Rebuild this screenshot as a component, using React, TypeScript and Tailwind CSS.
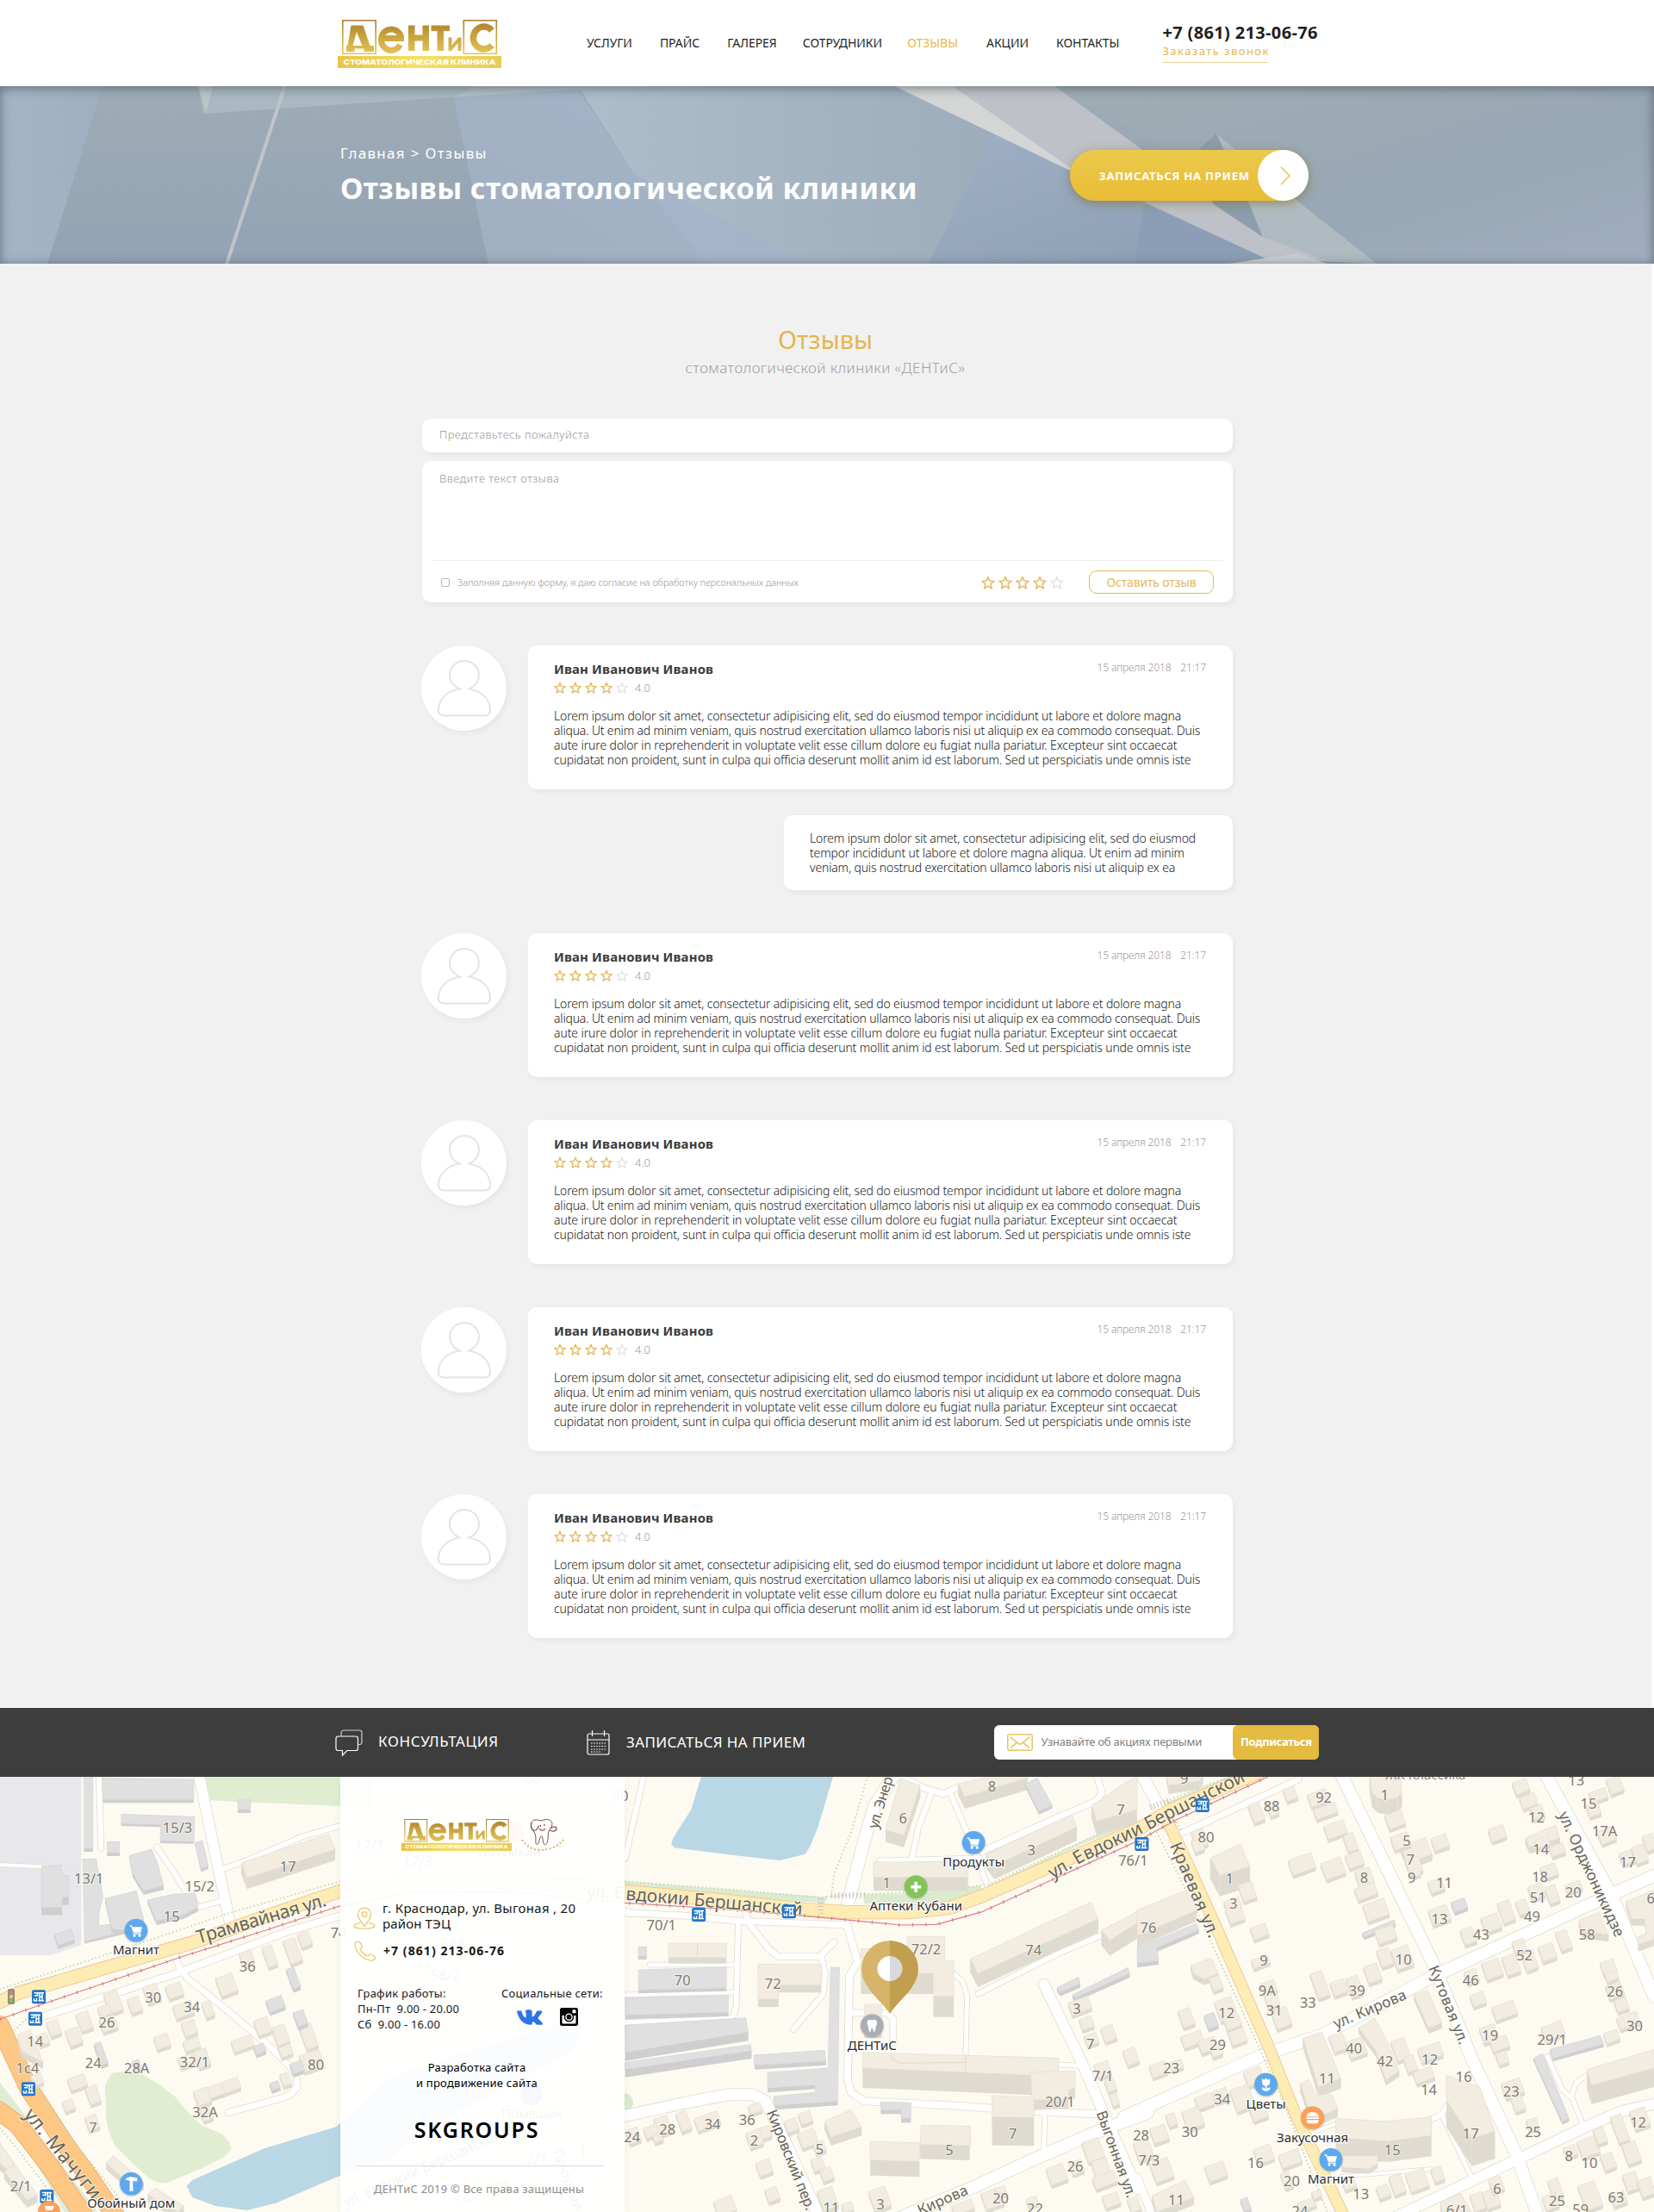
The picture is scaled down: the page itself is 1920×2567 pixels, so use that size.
import type { ReactNode } from "react";

/* ---------- map drawing ---------- */

type Region = "A" | "B" | "C" | "S";

// Tile origin and scale of each map survey sheet.
const SHEETS: Record<Region, [number, number]> = {
  A: [0, 1 / 3],
  B: [720, 600 / 1568],
  C: [1320, 600 / 1568],
  S: [390, 1 / 3],
};

const at = (r: Region, x: number, y: number): [number, number] => [
  Math.round((SHEETS[r][0] + x * SHEETS[r][1]) * 10) / 10,
  Math.round((y / 3 - 2) * 10) / 10,
];

const pts = (r: Region, s: string): [number, number][] =>
  s.split(" ").map((p) => {
    const [x, y] = p.split(",").map(Number);
    return at(r, x, y);
  });

const str = (p: [number, number][]) => p.map((q) => q.join(",")).join(" ");

const AREAS: [Region, string, string][] = [
  ["A", "#e7e7ec", "0,0 283,0 283,592 175,627 0,627"],
  ["A", "#e0edd1", "712,0 1300,0 1300,112 1185,108 733,88"],
  ["A", "#e0edd1", "366,1080 390,1037 430,1033 500,1045 555,1078 610,1120 660,1180 700,1218 775,1250 800,1280 805,1305 780,1330 690,1375 580,1420 550,1418 520,1405 450,1340 400,1290 378,1240 370,1200"],
  ["A", "#dfecd3", "0,1070 60,1150 340,1521 225,1521 0,1140"],
  ["S", "#b9d7e4", "-520,1430 -500,1410 -250,1300 0,1225 190,1050 500,950 760,870 860,860 830,960 600,1080 370,1200 200,1330 0,1400 -210,1490 -310,1515 -420,1500 -500,1470"],
  ["B", "#b9d7e4", "247,0 647,0 600,180 575,250 560,275 485,297 350,280 165,253 155,240 160,220 215,120"],
  ["B", "#dcead0", "-200,350 15,370 400,405 630,425 620,445 400,430 15,390 -200,372"],
  ["B", "#dcead0", "740,415 900,412 1090,385 1100,400 1070,420 1000,445 740,448"],
  ["B", "#dcead0", "1120,385 1568,140 1568,165 1400,240 1125,395"],
  ["C", "#dcead0", "90,95 290,0 350,0 95,125"],
];

const ROADS: [Region, number, string][] = [
  ["A", 6, "345,0 352,255"],
  ["A", 12, "693,0 740,230 800,510"],
  ["A", 6, "780,325 840,305 1050,215 1190,175"],
  ["A", 6, "545,250 600,330 650,410 690,460 765,440"],
  ["A", 4, "0,312 215,322"],
  ["A", 8, "150,840 600,695 1000,545 1185,490 1450,440 1900,440 2200,480"],
  ["A", 7, "605,615 625,670 650,705 780,810 930,935 1010,1015 1032,1050 1035,1085 1015,1110 980,1125 795,1175"],
  ["B", 6, "72,0 15,290"],
  ["B", 14, "830,0 770,110 735,250 690,450"],
  ["B", 8, "680,490 720,650 695,700 690,1060 700,1105 740,1135 1000,1150 1250,1170 1440,1180"],
  ["B", 7, "0,478 200,490 360,508 690,522"],
  ["B", 7, "380,480 390,515 450,605 480,632 605,632 648,582"],
  ["B", 6, "610,632 622,690 615,765 525,885"],
  ["B", 6, "358,505 352,800 345,835 330,848 15,862"],
  ["B", 5, "90,660 350,660"],
  ["B", 5, "15,765 348,755"],
  ["B", 7, "698,828 810,828 828,848 828,930"],
  ["B", 5, "920,662 1000,680 1040,720 1052,770 1048,975"],
  ["B", 6, "1085,762 1330,620 1480,548"],
  ["B", 6, "945,60 905,180 885,290"],
  ["B", 7, "840,0 920,45 980,65 1020,45"],
  ["B", 6, "1002,65 1060,220 1120,405"],
  ["B", 7, "1445,0 1462,60 1445,90 1340,140 1100,265"],
  ["B", 5, "785,297 1090,288"],
  ["B", 12, "1285,728 1400,1000 1490,1240 1568,1440"],
  ["B", 14, "1600,1175 1440,1245 1260,1335 1060,1440 850,1540"],
  ["B", 5, "1288,1170 1285,1310"],
  ["B", 5, "1330,1008 1390,1012"],
  ["B", 13, "0,1190 200,1140 330,1112 400,1112 440,1135 470,1200 600,1530"],
  ["C", 14, "-40,1190 380,975 560,905 900,700 1440,415 1568,350"],
  ["C", 14, "620,0 900,660 1020,1000 1150,1320 1215,1530"],
  ["C", 14, "1240,0 1440,420 1568,770"],
  ["C", 13, "15,0 85,150"],
  ["C", 7, "120,210 490,15"],
  ["C", 12, "780,1540 1150,1340 1350,1230 1470,1170 1568,1145"],
  ["C", 4, "540,1240 600,1215"],
  ["C", 4, "620,1398 900,1370"],
  ["C", 6, "890,1200 925,1180 940,1150 1050,1095"],
  ["C", 5, "925,1185 1010,1390"],
  ["C", 5, "1245,980 1290,1095 1320,1125 1355,1225"],
  ["C", 5, "1318,1115 1332,1070 1365,1045"],
  ["C", 9, "0,1400 45,1530"],
];

const YELLOW: [number, number][] = [
  ...pts("A", "0,790 60,760 250,705 680,580 900,500 1190,402"),
  ...pts("S", "250,380 500,370 700,375"),
  ...pts("B", "15,405 300,435 560,468 700,478 870,478 1000,462 1100,420 1300,320 1568,190"),
  ...pts("C", "100,122 370,-10"),
];
const TRAM: [number, number][] = [
  ...pts("A", "0,850 140,800 400,712 640,630 900,548 1185,455"),
  ...pts("S", "250,410 600,405"),
  ...pts("B", "15,445 300,465 560,490 850,522 960,520 1100,475 1300,370 1568,230"),
  ...pts("C", "120,155 400,4"),
];
const KRAEVAYA = pts("C", "90,155 150,300 240,530 400,950 480,1180 625,1530");
const MACHUGI = pts("A", "0,870 40,960 100,1090 230,1290 300,1385 400,1530");
const MACHUGI_2 = pts("A", "-10,1165 60,1215 180,1370 290,1530");

const DOTS: [Region, string][] = [
  ["A", "0,745 400,615 800,480 1185,370"],
  ["A", "35,940 50,890 90,850"],
  ["A", "40,930 90,1040 160,1150 300,1330 430,1490"],
  ["A", "0,1230 60,1300 180,1460"],
  ["B", "15,370 300,395 600,425 740,415 1000,400 1120,380 1568,142"],
  ["B", "750,6 700,200 650,340 640,415"],
  ["C", "90,90 290,0"],
  ["C", "60,200 200,520 390,1000 440,1130 580,1530"],
  ["C", "120,165 135,195"],
];

const LIGHT = ["#f2ece1", "#dfdbd0"];
const GREY = ["#e0e0e1", "#cfcfd0"];

// Larger buildings: sheet, palette, wall height, roof outline.
const BLOCKS: [Region, string[], number, string][] = [
  ["A", GREY, 4, "358,10 675,15 675,85 358,85"],
  ["A", GREY, 4, "292,6 324,6 324,255 292,255"],
  ["A", GREY, 3, "422,136 678,145 676,230 558,228 558,172 422,168"],
  ["A", GREY, 4, "373,232 417,232 417,270 373,270"],
  ["A", GREY, 4, "828,84 872,84 872,120 828,120"],
  ["A", GREY, 9, "144,315 216,315 216,350 240,350 240,425 216,425 216,460 144,460"],
  ["A", GREY, 3, "288,292 335,292 358,420 345,470 345,525 440,510 430,545 294,578"],
  ["A", GREY, 5, "450,280 528,258 548,305 570,385 500,402 462,340"],
  ["A", GREY, 5, "366,430 475,403 500,500 430,540 390,535"],
  ["A", GREY, 5, "515,435 600,415 680,410 690,460 640,485 545,508"],
  ["A", GREY, 4, "680,235 705,228 725,315 700,325"],
  ["A", LIGHT, 13, "840,305 1145,205 1167,258 860,358"],
  ["A", LIGHT, 8, "60,905 105,885 150,1000 75,960"],
  ["A", LIGHT, 8, "370,1350 395,1325 500,1420 470,1440"],
  ["A", LIGHT, 9, "0,1280 50,1350 30,1375 0,1350"],
  ["A", LIGHT, 9, "15,1380 50,1355 130,1460 95,1480"],
  ["A", LIGHT, 9, "515,1460 540,1437 640,1500 620,1521"],
  ["B", LIGHT, 14, "850,10 910,35 860,210 805,190"],
  ["B", LIGHT, 14, "1025,30 1140,0 1235,0 1235,10 1045,75"],
  ["B", LIGHT, 16, "768,302 1055,302 1055,355 768,355"],
  ["B", LIGHT, 16, "1110,275 1370,137 1385,180 1135,315"],
  ["B", LIGHT, 16, "1430,105 1568,0 1568,120 1445,160"],
  ["B", GREY, 4, "1228,30 1265,10 1310,105 1270,125"],
  ["B", LIGHT, 7, "146,585 322,585 322,635 146,635"],
  ["B", LIGHT, 9, "418,658 610,658 610,730 480,730 480,780 418,780"],
  ["B", GREY, 4, "55,598 80,598 80,630 55,630"],
  ["B", GREY, 4, "55,678 322,668 322,740 55,748"],
  ["B", GREY, 5, "15,775 328,767 328,825 15,835"],
  ["B", GREY, 10, "15,870 380,845 388,895 15,965"],
  ["B", GREY, 9, "15,1000 395,938 398,960 15,1025"],
  ["B", GREY, 5, "405,975 620,958 624,995 408,1010"],
  ["B", GREY, 5, "638,670 665,670 660,1135 470,1150 466,1118 592,1105 592,1078 447,1090 447,1035 630,1020"],
  ["B", LIGHT, 24, "730,605 870,600 870,562 985,562 985,645 1012,645 1012,770 950,770 950,690 730,690"],
  ["B", LIGHT, 10, "740,798 793,798 793,885 740,885"],
  ["B", LIGHT, 16, "1062,640 1428,442 1450,500 1085,690"],
  ["B", LIGHT, 18, "1460,540 1568,475 1568,515 1485,575"],
  ["B", GREY, 5, "1325,740 1390,703 1395,725 1335,755"],
  ["B", GREY, 5, "1372,765 1540,670 1545,690 1380,775"],
  ["B", LIGHT, 23, "735,965 1330,985 1330,1035 1250,1045 735,1020"],
  ["B", LIGHT, 12, "1245,1035 1380,1030 1380,1090 1360,1095 1360,1125 1250,1130"],
  ["B", GREY, 5, "790,1138 882,1140 882,1195 852,1195 852,1165 790,1165"],
  ["B", LIGHT, 33, "1128,1115 1255,1122 1255,1192 1128,1190"],
  ["B", LIGHT, 17, "913,1218 1062,1222 1060,1290 910,1285"],
  ["B", LIGHT, 18, "758,1275 908,1280 908,1345 758,1340"],
  ["B", LIGHT, 10, "620,1205 700,1165 732,1225 640,1260"],
  ["C", LIGHT, 10, "90,0 200,0 190,20 95,35"],
  ["C", LIGHT, 17, "705,0 800,0 803,60 790,78 760,86 730,80 712,60"],
  ["C", LIGHT, 24, "222,288 313,240 342,318 250,350"],
  ["C", LIGHT, 13, "0,470 150,400 180,455 180,470 0,560"],
  ["C", GREY, 5, "0,600 180,517 187,538 60,600 65,645 0,655"],
  ["C", LIGHT, 8, "800,250 875,215 895,275 820,305"],
  ["C", LIGHT, 7, "163,662 225,637 245,690 205,710 170,690"],
  ["C", LIGHT, 12, "503,915 560,893 618,1055 550,1085"],
  ["C", LIGHT, 7, "840,765 880,748 925,860 885,880"],
  ["C", LIGHT, 7, "672,880 720,845 760,930 795,1030 755,1060 725,960"],
  ["C", LIGHT, 32, "938,1045 1040,1085 1085,1240 1015,1265 938,1130"],
  ["C", LIGHT, 24, "602,1195 750,1205 893,1190 893,1255 760,1275 602,1262"],
  ["C", LIGHT, 6, "620,1325 730,1325 730,1350 705,1370 620,1365"],
  ["C", LIGHT, 22, "1365,1025 1568,955 1568,1020 1378,1080"],
  ["C", GREY, 4, "1252,955 1405,907 1415,935 1262,985"],
  ["C", GREY, 4, "1203,985 1230,970 1310,1195 1290,1205"],
  ["C", LIGHT, 8, "1178,218 1270,173 1282,220 1190,250"],
  ["C", LIGHT, 8, "1340,505 1400,478 1430,555 1350,545"],
  ["C", LIGHT, 8, "1483,440 1568,400 1568,570 1520,590 1518,565 1545,550 1540,500 1500,500"],
  ["C", GREY, 4, "683,550 780,503 783,520 690,562"],
  ["C", LIGHT, 9, "45,1465 145,1410 172,1470 60,1521"],
  ["C", LIGHT, 10, "495,1075 520,1060 545,1115 590,1110 608,1160 560,1185 520,1160"],
  ["C", LIGHT, 8, "920,1490 980,1455 1015,1521 925,1521"],
];

// Small houses: sheet, palette, then centre x, centre y, width, height for each.
const HOUSES: [Region, string[], number, string][] = [
  ["A", LIGHT, -20, "608,755,18,15 790,735,20,22 940,635,11,24 1020,617,14,28 1062,577,13,16 470,805,13,17 395,795,16,24 365,825,14,12 295,862,14,21 188,886,13,17 258,916,15,19 565,932,16,15 640,822,22,15 725,820,10,18 660,886,15,16 668,943,18,12 845,940,24,13 915,880,16,18 978,910,15,22 995,965,14,12 1075,915,14,28 1085,1000,24,20 150,925,12,12 130,1065,12,12 270,1075,20,14 325,1118,13,20 240,1155,12,12 322,1215,13,16 805,1085,20,13 750,1105,20,13 705,1125,16,18 720,1185,12,14 530,765,16,20 860,640,14,14 650,1000,18,12 705,990,14,20 378,870,18,16 995,1065,10,14"],
  ["A", GREY, -20, "1022,712,9,24 960,802,19,14 1047,852,12,17 905,958,12,10 1035,1022,14,12 958,1086,10,8 352,975,8,26 225,570,20,13 475,1010,8,8"],
  ["B", LIGHT, -20, "1415,868,14,13 1482,905,14,17 1430,925,14,12 1395,808,24,15 1550,985,14,18 1488,1085,10,14 1465,1030,16,16 1500,1135,8,14 410,1165,14,10 193,1210,12,22 265,1210,28,15 130,1225,16,20 95,1245,16,12 40,1260,14,16 115,1270,10,8 520,1225,14,14 562,1198,14,13 438,1250,14,13 408,1270,16,18 570,1270,20,18 605,1300,12,12 600,1360,13,14 627,1395,13,14 438,1372,16,16 462,1465,14,15 318,1505,22,18 788,1480,20,24 630,1480,18,24 690,1510,12,10 1325,1395,20,20 1435,1310,20,24 1458,1370,18,18 1470,1415,26,14 1385,1370,14,14 1130,1480,22,20 1155,1455,12,10 1250,1490,12,10 1490,1485,18,14 1040,1510,24,12 1560,1500,12,16"],
  ["C", LIGHT, -20, "362,135,13,22 412,125,10,14 465,70,13,15 550,85,22,15 572,130,26,12 602,195,24,16 648,240,12,20 660,300,18,16 690,360,18,18 595,330,24,20 500,315,28,18 695,410,24,14 725,475,26,20 755,560,22,16 752,640,14,20 805,640,20,24 783,160,20,17 800,235,20,16 920,240,18,15 840,320,16,18 845,345,10,8 1093,208,18,15 908,390,16,14 918,492,22,18 1165,45,17,15 1188,95,18,14 1215,135,14,14 1275,265,16,12 1230,240,16,10 1250,340,18,14 1212,410,16,16 1260,420,12,20 1170,465,12,16 1120,480,14,24 1075,520,20,18 1005,565,14,18 1325,395,18,10 1450,40,16,18 1400,75,20,12 1385,125,14,14 1425,215,18,16 1490,290,18,14 1525,280,14,20 1555,240,12,18 1078,680,20,20 1135,665,16,22 1190,650,14,22 1245,622,17,18 1295,580,13,22 1015,705,14,14 1160,600,14,14 1035,785,16,14 1115,825,26,16 1068,905,18,18 1100,940,20,14 1108,990,12,14 1140,1095,22,18 1155,1145,12,20 1200,1220,12,12 1262,895,24,16 1430,672,16,14 1440,705,14,10 1450,755,18,16 1470,805,14,14 1490,860,24,14 1440,915,16,12 372,550,18,14 335,410,16,20 290,455,18,12 298,490,18,18 375,655,20,10 400,745,16,14 410,790,14,14 438,850,18,22 555,735,14,30 612,745,16,16 660,740,14,22 715,695,16,20 270,820,20,24 290,865,18,14 150,850,14,20 168,925,24,14 305,915,18,16 215,945,20,14 240,965,12,12 65,1030,18,14 120,1015,14,10 240,730,12,16 355,1055,20,18 255,1120,16,14 205,1140,20,14 320,1130,22,26 370,1180,18,16 170,1200,20,22 105,1205,10,14 68,1255,18,18 20,1310,18,22 75,1380,22,24 240,1385,22,18 385,1325,20,18 465,1340,24,16 455,1415,10,18 515,1500,20,10 610,935,16,20 665,955,20,20 800,960,16,24 830,1010,12,18 890,970,26,16 870,1050,22,14 748,1455,14,14 790,1430,14,22 850,1415,22,22 912,1395,12,16 645,1430,14,10 1035,1490,14,20 1075,1480,16,20 1090,1430,14,16 1270,1445,12,22 1375,1470,20,30 1255,1490,16,16 1315,1315,14,12 1370,1300,22,20 1405,1260,12,18 1430,1350,14,18 1465,1235,13,32 1500,1320,16,24 1525,1200,18,22 1500,1420,16,20 1545,1440,16,20 1462,1480,16,14 545,1465,10,8 190,225,14,20 185,250,12,14"],
  ["C", GREY, -20, "978,458,16,12 225,860,12,16 330,1500,8,14"],
];

const NUMBERS: [Region, string][] = [
  ["A", "15/3@618,185 13/1@310,362 15/2@695,388 15@598,493 17@1003,320 36@862,668 30@533,776 34@668,808 26@372,863 14@122,928 1с4@96,1022 24@325,1004 28А@476,1022 32/1@678,1000 80@1100,1008 32А@714,1174 7@324,1228 2/1@73,1432 74@1180,550"],
  ["S", "17/1@118,245 17/3@285,300 58А@408,585 58/2@380,698 2/1@700,1335 1@860,1305 29@575,1435 12@438,1465 26@770,235 66@685,14 90@990,72"],
  ["B", "8@1128,40 6@858,152 7@1518,120 3@1247,263 1@808,375 70/1@125,522 72/2@928,608 74@1254,610 70@189,716 72@463,728 3@1385,815 7@1426,938 7/1@1464,1048 20/1@1334,1138 24@36,1262 28@143,1234 34@280,1217 36@385,1202 2@406,1272 5@605,1302 5@998,1306 7@1191,1250 26@1380,1364 20@1154,1475 22@1258,1510 11@640,1506 3@789,1494 76/1@1556,298"],
  ["C", "9@143,14 1@751,70 88@408,108 92@566,80 80@209,217 1@281,360 5@818,228 7@829,296 8@689,357 9@833,357 11@932,377 13@917,502 3@292,448 76@34,533 9@384,646 9А@394,752 10@808,642 12@1211,149 14@1225,258 18@1222,356 51@1216,426 20@1323,410 49@1198,494 43@1044,557 58@1365,557 52@1175,627 46@1012,716 13@1332,18 15@1369,100 17А@1418,195 17@1488,304 6@1558,430 26@1450,754 30@1509,873 29/1@1259,923 19@1071,908 16@991,1052 23@1135,1102 25@1201,1242 17@1012,1250 31@416,820 33@518,792 39@667,752 12@271,828 29@244,941 40@658,952 42@752,998 12@888,990 14@885,1095 11@576,1058 23@104,1021 34@258,1130 28@12,1254 30@160,1242 7/3@36,1343 16@359,1350 20@469,1415 11@119,1480 15@774,1307 13@679,1460 8@1310,1327 10@1372,1351 12@1520,1211 6@1092,1442 25@1274,1484 63@1453,1472 59@1345,1514 6/1@970,1516 24@494,1520"],
];

// Street names: sheet, centre x, centre y, rotation, size, drawn length, text.
const STREETS: [Region, number, number, number, number, number, string][] = [
  ["A", 910, 500, -16.5, 21.5, 156, "Трамвайная ул."],
  ["A", 218, 1318, 51, 22.5, 128, "ул. Мачуги"],
  ["B", 285, 440, 5, 21, 206, "вдокии Бершанской"],
  ["B", 790, 95, -73, 16.5, 62, "ул. Энер"],
  ["B", 518, 1340, 68, 17, 124, "Кировский пер."],
  ["B", 1505, 1320, 70, 17, 106, "Выгонная ул."],
  ["B", 978, 1480, -24, 17, 62, "Кирова"],
  ["C", 175, 400, 67, 20, 118, "Краевая ул."],
  ["C", 706, 815, -23, 17, 90, "ул. Кирова"],
  ["C", 945, 800, 68, 17, 97, "Кутовая ул."],
  ["C", 1378, 345, 65, 17.5, 158, "ул. Орджоникидзе"],
];

const POIS: [Region, number, number, string, string, string][] = [
  ["A", 474, 541, "#5ea8ef", "cart", "Магнит"],
  ["A", 457, 1423, "#5ea8ef", "hammer", "Обойный дом"],
  ["B", 1072, 235, "#5ea8ef", "cart", "Продукты"],
  ["B", 897, 389, "#84c456", "plus", "Аптеки Кубани"],
  ["B", 764, 872, "#a9aeb6", "tooth", "ДЕНТиС"],
  ["C", 391, 1077, "#5ea8ef", "flower", "Цветы"],
  ["C", 532, 1193, "#fd9f58", "burger", "Закусочная"],
  ["C", 588, 1339, "#5ea8ef", "cart", "Магнит"],
];

const GLYPHS: Record<string, ReactNode> = {
  cart: (
    <g fill="#fff">
      <path d="M-7.500-6h2.600l.7 2H7L5.400 2.500H-3.200L-5.800-4.600h-1.700z" />
      <path d="M-3.400 3.200H5.600v1.200H-3.600z" />
      <circle cx="-2" cy="6" r="1.500" />
      <circle cx="4" cy="6" r="1.500" />
    </g>
  ),
  hammer: <path fill="#fff" d="M-7-4.500C-5-7.500-2-8.300 1-7.800L7-7v4H1.800L2.300 8.500H-2L-1.500-3C-3-4.500-5-4.500-7-4.500z" />,
  plus: <path fill="#fff" d="M-1.800-6h3.600v4.200H6v3.600H1.800V6h-3.600V1.800H-6v-3.600h4.200z" />,
  tooth: <path fill="#fff" d="M-5.500-5C-4-8-1.500-6.500 0-6.200 1.500-6.500 4-8 5.500-5 6.500-2 4 1 4 4 3.800 8 1.500 8 1.200 5 1 2.500-1 2.500-1.200 5-1.500 8-3.800 8-4 4-4 1-6.500-2-5.500-5z" />,
  flower: (
    <g fill="#fff">
      <path d="M-4.500-7l2.300 1.800L0-7.500l2.200 2.300L4.500-7v5c0 2.500-2 3.600-4.500 3.600S-4.500.5-4.500-2z" />
      <path d="M-.8 1h1.600v7H-.8z" />
      <path d="M-5 3.500c3-.5 5 1.500 5 4C-3 8-5 6-5 3.500zM5 3.500c-3-.5-5 1.500-5 4C3 8 5 6 5 3.500z" />
    </g>
  ),
  burger: (
    <g fill="#fff">
      <path d="M-7-1.500C-7-5-4.500-6.500 0-6.500S7-5 7-1.500z" />
      <path d="M-7.500-.5h15v1.800h-15z" />
      <path d="M-7 2.500H7C7 5 6 6.500 4 6.500H-4C-6 6.500-7 5-7 2.500z" />
    </g>
  ),
};

const STOPS: [Region, number, number][] = [
  ["A", 135, 772],
  ["A", 123, 848],
  ["A", 99, 1093],
  ["A", 163, 1467],
  ["B", 238, 486],
  ["B", 512, 475],
  ["B", 1582, 240],
  ["C", 198, 105],
];

function Prism({ p, h, colors }: { p: [number, number][]; h: number; colors: string[] }) {
  return (
    <g>
      {p.map((a, i) => {
        const b = p[(i + 1) % p.length];
        return (
          <polygon
            key={i}
            fill={colors[1]}
            points={str([a, b, [b[0], b[1] + h], [a[0], a[1] + h]])}
          />
        );
      })}
      <polygon fill={colors[0]} stroke={colors[1]} strokeWidth=".4" points={str(p)} />
    </g>
  );
}

function house(r: Region, cx: number, cy: number, w: number, h: number, rot: number): [number, number][] {
  const [x, y] = at(r, cx, cy);
  const a = (rot * Math.PI) / 180;
  const c = Math.cos(a);
  const s = Math.sin(a);
  return [
    [-w / 2, -h / 2],
    [w / 2, -h / 2],
    [w / 2, h / 2],
    [-w / 2, h / 2],
  ].map(([u, v]) => [+(x + u * c - v * s).toFixed(1), +(y - 2 + u * s + v * c).toFixed(1)]);
}

function CityMap() {
  const line = { fill: "none", strokeLinejoin: "round" as const, strokeLinecap: "round" as const };
  const halo = { paintOrder: "stroke", stroke: "#fdfaf1", strokeOpacity: 0.7, strokeLinejoin: "round" as const };
  return (
    <svg className="absolute inset-0 block font-['Noto_Sans',sans-serif]" width="1920" height="505" viewBox="0 0 1920 505">
      <rect width="1920" height="505" fill="#fdfaf1" />
      {AREAS.map(([r, f, s], i) => (
        <polygon key={i} fill={f} points={str(pts(r, s))} />
      ))}
      <circle cx="724" cy="378" r="11" fill="#dcead0" />
      {ROADS.map(([r, w, s], i) => (
        <polyline key={i} {...line} stroke="#e2dccd" strokeWidth={w + 1.6} points={str(pts(r, s))} />
      ))}
      {ROADS.map(([r, w, s], i) => (
        <polyline key={i} {...line} stroke="#fff" strokeWidth={w} points={str(pts(r, s))} />
      ))}
      {[YELLOW, KRAEVAYA].map((p, i) => (
        <polyline key={i} {...line} stroke="#ecc08e" strokeWidth={i ? 14 : 16} points={str(p)} />
      ))}
      {[YELLOW, KRAEVAYA].map((p, i) => (
        <polyline key={i} {...line} stroke="#fdecb3" strokeWidth={i ? 12.4 : 14.4} points={str(p)} />
      ))}
      {[MACHUGI, MACHUGI_2].map((p, i) => (
        <g key={i}>
          <polyline {...line} stroke="#e9a56c" strokeWidth="22" points={str(p)} />
          <polyline {...line} stroke="#ffc784" strokeWidth="20.5" points={str(p)} />
        </g>
      ))}
      {DOTS.map(([r, s], i) => (
        <polyline key={i} {...line} stroke="#c6dab4" strokeWidth="2" strokeDasharray="0 4.5" points={str(pts(r, s))} />
      ))}
      {BLOCKS.map(([r, c, h, s], i) => (
        <Prism key={i} p={pts(r, s)} h={h} colors={c} />
      ))}
      {HOUSES.map(([r, c, rot, s]) =>
        s.split(" ").map((q, i) => {
          const [x, y, w, h] = q.split(",").map(Number);
          return <Prism key={i} p={house(r, x, y, w, h, rot)} h={4.5} colors={c} />;
        }),
      )}
      <g fill="none" stroke="#e2dccd" strokeWidth="1">
        <polyline points={str(pts("B", "820,970 825,990 850,1003 1048,1000 1048,970"))} />
        <polyline points={str(pts("B", "1048,1000 1048,1095"))} />
        <polyline points={str(pts("B", "234,585 234,652"))} />
      </g>
      <polyline {...line} stroke="#d97f86" strokeWidth="1.2" points={str(TRAM)} />
      <polyline fill="none" stroke="#d97f86" strokeWidth="4" strokeDasharray="1.2 14.5" points={str(TRAM)} />
      <g stroke="#c9c9c9" strokeWidth="7" strokeDasharray="1.2 3" fill="none">
        <polyline points={str(pts("B", "640,420 745,418"))} />
        <polyline points={str(pts("B", "608,430 608,482"))} />
        <polyline points={str(pts("C", "40,112 95,90"))} />
      </g>

      {NUMBERS.map(([r, s]) =>
        s.split(" ").map((q, i) => {
          const [t, c] = q.split("@");
          const [x, y] = at(r, ...(c.split(",").map(Number) as [number, number]));
          return (
            <text key={i} x={x} y={y + 5.7} fontSize="16.5" textAnchor="middle" fill="#7b7974" strokeWidth="2" {...halo}>
              {t}
            </text>
          );
        }),
      )}
      {STREETS.map(([r, cx, cy, rot, size, len, t], i) => {
        const [x, y] = at(r, cx, cy);
        return (
          <text key={i} transform={`translate(${x} ${y}) rotate(${rot})`} y={size * 0.33} fontSize={size} textLength={len} textAnchor="middle" fill="#67635b" strokeWidth="2" {...halo}>
            {t}
          </text>
        );
      })}
      <path id="bersh" fill="none" d="M1222 119L1256 99Q1322 68 1350 53L1480 -12" />
      <text fontSize="21" fill="#67635b" strokeWidth="2" {...halo}>
        <textPath href="#bersh" textLength="252">ул. Евдокии Бершанской</textPath>
      </text>
      <text x="681" y="141" fontSize="20" fill="#67635b">ул. Е</text>
      <text x="1608" y="3" fontSize="15" fill="#8b8882">ЖК Классика</text>
      <text x="555" y="92" fontSize="15" fill="#67635b">Потёмкин</text>
      <text x="582" y="396" fontSize="15" fill="#67635b">Помещик</text>
      <circle cx="595" cy="64" r="13" fill="#f5a08c" />
      <circle cx="617" cy="368" r="13" fill="#8f8ff0" />
      <text transform="translate(402 500) rotate(-24)" fontSize="17" textLength="200" fill="#67635b">ул. Евдокии Бершанской</text>
      <text transform="translate(642 435) rotate(70)" fontSize="15" fill="#67635b">Почтовый</text>

      {STOPS.map(([r, cx, cy], i) => {
        const [x, y] = at(r, cx, cy);
        return (
          <g key={i} transform={`translate(${x} ${y})`}>
            <rect x="-8" y="-8" width="16" height="16" rx="2" fill="#2476ca" />
            <path d="M-5.500-4.500H6M-1.500-4v2.500h-3.500M-5.500 2v2.500h3V1.500M1-4V4.500M4-4V4.500M-.5 4.500H6M1 0h3" fill="none" stroke="#fff" strokeWidth="1.500" />
          </g>
        );
      })}
      <g transform="translate(13 255)">
        <rect x="-4" y="-9" width="8" height="18" rx="2" fill="#8d8d8d" />
        <circle cy="-5" r="2.200" fill="#ee7b6c" />
        <circle r="2.200" fill="#f3d34b" />
        <circle cy="5" r="2.200" fill="#7dc64b" />
      </g>
      {POIS.map(([r, cx, cy, f, g, t], i) => {
        const [x, y] = at(r, cx, cy);
        return (
          <g key={i} transform={`translate(${x} ${y})`}>
            <circle r="14.500" cy=".8" fill="#000" opacity=".1" />
            <circle r="13.300" fill={f} />
            {GLYPHS[g]}
            <text y={g === "plus" ? 27 : 28} fontSize="15" textAnchor="middle" fill="#2c2c2c" strokeWidth="2.500" paintOrder="stroke" stroke="#fff" strokeLinejoin="round">
              {t}
            </text>
          </g>
        );
      })}
      <g transform="translate(57 505)">
        <circle r="13" fill="#fd9f58" />
        <path d="M-5-7H6L4-2H-4z" fill="#fff" />
      </g>
      <g transform="translate(1033 190)">
        <path d="M0 85C-9 70-33 55-33 33A33 33 0 0 1 0 0z" fill="#d6b46a" />
        <path d="M0 85C9 70 33 55 33 33A33 33 0 0 0 0 0z" fill="#c19f4f" />
        <path d="M0 18A14.500 14.500 0 0 0 0 47z" fill="#fff" />
        <path d="M0 18A14.500 14.500 0 0 1 0 47z" fill="#dadade" />
      </g>
    </svg>
  );
}

/* ---------- shared pieces ---------- */

function Logo({ className }: { className: string }) {
  return (
    <svg className={className} viewBox="0 0 190 56" preserveAspectRatio="none">
      <defs>
        <linearGradient id="gold" gradientUnits="userSpaceOnUse" x1="0" y1="0" x2="0" y2="42">
          <stop offset="0" stopColor="#a87a30" />
          <stop offset=".4" stopColor="#c5a03c" />
          <stop offset="1" stopColor="#e7c75a" />
        </linearGradient>
        <linearGradient id="strip" x1="0" y1="0" x2="1" y2="0">
          <stop offset="0" stopColor="#e8c44c" />
          <stop offset=".5" stopColor="#f6e064" />
          <stop offset="1" stopColor="#e9cb58" />
        </linearGradient>
      </defs>
      <path d="M5.800.8h38.400v38.400H5.800zM146.300.8h38v38.400h-38z" fill="#fff" stroke="url(#gold)" strokeWidth="1.600" />
      <path fill="url(#gold)" fillRule="evenodd" d="M15.500 6.500h14L37.500 30H42v7H30.500v-3.500h-11V37H10v-7h1.500zM22 14l-4.500 16h10.800z" />
      <g fill="none" stroke="url(#gold)">
        <path d="M73.800 21.500A11.700 12.200 0 1 0 72.500 29M50.500 21.500H77" strokeWidth="7" />
        <path d="M179 12.500A12.300 13 0 1 0 179 29.500" strokeWidth="7.500" />
      </g>
      <g fill="url(#gold)">
        <path d="M82 6.500h7.500v11h9v-11h7.500v29.500h-7.500V24.500h-9V36H82z" />
        <path d="M108.500 6.500h21.500v6.500h-7V36h-7.500V13h-7z" />
        <path d="M128.500 20.500h4v9l7.500-9h3.500V36h-4v-9L132 36h-3.500z" />
      </g>
      <rect y="42" width="190" height="14" fill="url(#strip)" />
      <text x="6.500" y="52" fontSize="8" fontWeight="800" fill="#fff" textLength="177" lengthAdjust="spacingAndGlyphs" fontFamily="Inter, sans-serif">
        СТОМАТОЛОГИЧЕСКАЯ КЛИНИКА
      </text>
    </svg>
  );
}

function Stars({ size, gap }: { size: string; gap: string }) {
  return (
    <div className={`flex ${gap}`}>
      {[1, 1, 1, 1, 0].map((on, i) => (
        <svg key={i} className={size} viewBox="0 0 16 16" fill="none">
          <path
            d="M8 1.700l1.900 4.400 4.900.5-3.700 3.200 1.100 4.900L8 12.200l-4.200 2.500 1.100-4.900L1.200 6.600l4.900-.5z"
            stroke={on ? "#e2b95a" : "#e3e3e3"}
            strokeWidth="1.500"
          />
        </svg>
      ))}
    </div>
  );
}

const card = "rounded-[10px] bg-white shadow-[2px_3px_6px_rgba(0,0,0,0.05)]";
const body = "whitespace-nowrap text-[14px] font-light leading-[17px] text-[#202020]";

function Review() {
  return (
    <article className="flex items-start">
      <div className="-ml-px flex size-[99px] shrink-0 items-center justify-center rounded-full bg-white shadow-[2px_3px_6px_rgba(0,0,0,0.05)]">
        <svg className="h-[66px] w-[62px]" viewBox="0 0 62 66" fill="none" stroke="#e4e4e4" strokeWidth="2">
          <path d="M25.500 33.500C18 30 14 25 14 17.500a17 16.500 0 0 1 34 0c0 7.500-4 12.500-11.500 16C50 36 60.500 44 61 57.500c.2 5-2 7-7 7H8c-5 0-7.200-2-7-7C1.500 44 12 36 25.500 33.500z" />
        </svg>
      </div>
      <div className={`ml-[25px] h-[167px] w-[818px] pl-[30px] pr-[31px] ${card}`}>
        <div className="flex justify-between">
          <h3 className="pt-[17px] text-[15px] font-bold leading-[20px] tracking-[0.12px] text-[#3b3b3b]">Иван Иванович Иванов</h3>
          <p className="flex gap-[11px] pt-[16px] text-[12px] font-light leading-[20px] tracking-[-0.14px] text-[#999999]">
            <span>15 апреля 2018</span>
            <span>21:17</span>
          </p>
        </div>
        <div className="mt-[5px] flex h-[14px] items-center">
          <Stars size="size-[14px]" gap="gap-[4px]" />
          <span className="ml-[8px] text-[13px] font-light leading-[14px] text-[#999999]">4.0</span>
        </div>
        <div className={`mt-[17px] ${body}`}>
          <p className="tracking-[-0.16px]">Lorem ipsum dolor sit amet, consectetur adipisicing elit, sed do eiusmod tempor incididunt ut labore et dolore magna</p>
          <p className="tracking-[-0.18px]">aliqua. Ut enim ad minim veniam, quis nostrud exercitation ullamco laboris nisi ut aliquip ex ea commodo consequat. Duis</p>
          <p className="tracking-[-0.1px]">aute irure dolor in reprehenderit in voluptate velit esse cillum dolore eu fugiat nulla pariatur. Excepteur sint occaecat</p>
          <p className="tracking-[-0.15px]">cupidatat non proident, sunt in culpa qui officia deserunt mollit anim id est laborum. Sed ut perspiciatis unde omnis iste</p>
        </div>
      </div>
    </article>
  );
}

const NAV: [string, string][] = [
  ["УСЛУГИ", "ml-0"],
  ["ПРАЙС", "ml-[32px]"],
  ["ГАЛЕРЕЯ", "ml-[32px]"],
  ["СОТРУДНИКИ", "ml-[30px]"],
  ["ОТЗЫВЫ", "ml-[29px]"],
  ["АКЦИИ", "ml-[33px]"],
  ["КОНТАКТЫ", "ml-[32px]"],
];

function Header() {
  return (
    <header className="flex h-[100px] items-start bg-white pl-[392px]">
      <Logo className="mt-[23px] h-[56px] w-[190px]" />
      <nav className="ml-[99px] mt-[40px] flex text-[14px] leading-[20px] tracking-[-0.04px] text-[#1f1f1f]">
        {NAV.map(([t, m]) => (
          <a key={t} className={`${m} ${t === "ОТЗЫВЫ" ? "text-[#e3b84c]" : ""}`}>
            {t}
          </a>
        ))}
      </nav>
      <div className="ml-[50px] pt-[26px]">
        <p className="text-[20px] font-bold leading-[24px] tracking-[0.35px] text-[#1f1f1f]">+7 (861) 213-06-76</p>
        <a className="block w-[123px] whitespace-nowrap border-b border-[#e7d29a] pb-[4px] text-[13px] leading-[18px] tracking-[1.46px] text-[#e3b84c]">Заказать звонок</a>
      </div>
    </header>
  );
}

function Hero() {
  return (
    <section className="relative h-[206px] overflow-hidden">
      <svg className="absolute inset-0 size-full" viewBox="0 30 1568 618" preserveAspectRatio="none">
        <defs>
          <linearGradient id="h1" x1="0" x2="0" y1="0" y2="1">
            <stop offset="0" stopColor="#9dacb5" />
            <stop offset="1" stopColor="#93a3b4" />
          </linearGradient>
          <linearGradient id="h2" x1="0" x2="1">
            <stop offset="0" stopColor="#adbdcc" />
            <stop offset="1" stopColor="#9aaab9" />
          </linearGradient>
          <linearGradient id="h3" x1="0" x2="1" y1="0" y2="1">
            <stop offset="0" stopColor="#9fb0c6" />
            <stop offset="1" stopColor="#8b9db3" />
          </linearGradient>
          <linearGradient id="h4" x1="0" x2="1" y1="0" y2="1">
            <stop offset="0" stopColor="#a0adb3" />
            <stop offset=".6" stopColor="#98a7b5" />
            <stop offset="1" stopColor="#a0aec0" />
          </linearGradient>
          <linearGradient id="h5" x1="1" x2="0" y1="0" y2="1">
            <stop offset="0" stopColor="#a5b5ca" />
            <stop offset="1" stopColor="#9fafbf" />
          </linearGradient>
          <linearGradient id="h6" x1="0" x2="1" y1="0" y2="0">
            <stop offset="0" stopColor="#a3b5c7" />
            <stop offset="1" stopColor="#9eafbf" />
          </linearGradient>
        </defs>
        <rect y="30" width="1568" height="618" fill="url(#h1)" />
        <polygon points="0,30 97,30 45,648 0,648" fill="url(#h6)" />
        <polygon points="548,30 1000,30 1000,648 670,648 600,330" fill="url(#h2)" />
        <polygon points="430,68 548,42 600,330 670,648 463,648" fill="url(#h5)" />
        <polygon points="600,330 760,648 668,648" fill="#a4b3ca" opacity=".6" />
        <polygon points="188,30 620,30 548,41 430,68 193,126" fill="#a9b8c1" />
        <polygon points="450,30 620,30 548,41 430,68" fill="#b2c1c5" />
        <polygon points="188,30 202,30 195,124" fill="#bac6c8" />
        <line x1="270" y1="30" x2="215" y2="648" stroke="#c0c4ca" strokeWidth="3.500" />
        <polygon points="1000,30 1568,30 1568,648 1305,648" fill="url(#h4)" />
        <polygon points="943,195 1015,315 1210,648 880,648" fill="url(#h3)" />
        <polygon points="880,648 925,565 940,648" fill="#95a6bd" />
        <polygon points="1085,440 1200,630 1165,648 1075,648" fill="#8c9eb6" />
        <polygon points="848,30 905,30 1025,300 1015,325" fill="#d4d5d5" />
        <polygon points="903,30 1000,30 1090,270 1200,560 1305,648 1200,630 1015,315" fill="#bfc1c8" />
        <polygon points="1153,195 1130,270 1150,440 1197,555 1200,420" fill="#8c9dad" />
        <polygon points="1153,195 1230,430 1305,648 1260,640 1197,555 1180,400" fill="#b0bbc1" />
        <polygon points="1165,648 1230,612 1258,648" fill="#c9ced1" />
      </svg>
      <div className="absolute inset-0 shadow-[inset_0_2px_12px_1px_rgba(50,60,70,0.5)]" />
      <div className="relative flex items-start pl-[395px]">
        <div className="w-[847px] text-white">
          <p className="pt-[66px] text-[17px] leading-[24px] tracking-[1.3px]">Главная &gt; Отзывы</p>
          <h1 className="mt-[7px] text-[34px] font-bold leading-[42px] tracking-[0.37px]">Отзывы стоматологической клиники</h1>
        </div>
        <button className="mt-[74px] flex h-[59px] w-[277px] items-center justify-between rounded-full bg-linear-to-b from-[#ecc94b] to-[#e9bc35] pl-[34px] shadow-[0_3px_12px_rgba(120,100,20,0.5)]">
          <span className="whitespace-nowrap pt-[2px] text-[13px] font-bold tracking-[0.77px] text-white">ЗАПИСАТЬСЯ НА ПРИЕМ</span>
          <span className="flex size-[59px] items-center justify-center rounded-full bg-white">
            <svg className="ml-[5px] h-[22px] w-[12px]" viewBox="0 0 12 22" fill="none" stroke="#e7c04b" strokeWidth="1.400">
              <path d="M1 .8L10.800 11 1 21.200" />
            </svg>
          </span>
        </button>
      </div>
    </section>
  );
}

function ReviewForm() {
  return (
    <form className="mt-[47px]">
      <div className={`h-[39px] px-[20px] pt-[8px] text-[13px] font-light leading-[20px] tracking-[0.42px] text-[#999999] ${card}`}>Представьтесь пожалуйста</div>
      <div className={`mt-[10px] flex h-[164px] flex-col ${card}`}>
        <p className="px-[20px] pt-[10px] text-[13px] font-light leading-[20px] tracking-[0.44px] text-[#999999]">Введите текст отзыва</p>
        <div className="mx-[12px] mt-auto h-[49px] border-t border-[#eeeeee]">
          <div className="flex h-[49px] items-center pl-[10px] pr-[10px]">
            <span className="size-[10px] rounded-[2px] border border-[#b4b4b4]" />
            <span className="ml-[9px] whitespace-nowrap pt-px text-[11px] font-light tracking-[-0.09px] text-[#999999]">Заполняя данную форму, я даю согласие на обработку персональных данных</span>
            <div className="ml-auto">
              <Stars size="size-[16px]" gap="gap-[4px]" />
            </div>
            <button className="ml-[29px] h-[27px] w-[145px] rounded-[9px] border border-[#e2b95a] text-center text-[14px] leading-[24px] tracking-[-0.17px] text-[#e2b95a]">Оставить отзыв</button>
          </div>
        </div>
      </div>
    </form>
  );
}

function ActionBar() {
  return (
    <div className="flex h-[80px] items-center bg-[#3d3d3d] pl-[389px] text-white">
      <svg className="h-[31px] w-[32px] shrink-0" viewBox="0 0 32 31" fill="none" stroke="#fff" strokeWidth="1.200">
        <path d="M7 7.500V4a3 3 0 0 1 3-3h18.500a2.500 2.500 0 0 1 2.500 2.500V15a2.500 2.500 0 0 1-2 2.500h-2" opacity=".75" />
        <path d="M3.500 8H24a2.500 2.500 0 0 1 2.500 2.500V22a2.500 2.500 0 0 1-2.500 2.500H14L8.500 30v-5.500h-5A2.500 2.500 0 0 1 1 22V10.500A2.500 2.500 0 0 1 3.500 8z" />
      </svg>
      <span className="-mt-[3px] ml-[18px] w-[242px] text-[17px] tracking-[0.62px]">КОНСУЛЬТАЦИЯ</span>
      <svg className="h-[29px] w-[27px] shrink-0" viewBox="0 0 27 29" fill="none" stroke="#fff" strokeWidth="1.200">
        <rect x="1" y="4" width="25" height="24" rx="2" />
        <path d="M1 11h25M6.500 0v7M20.500 0v7" />
        <path d="M5 15h17M5 18.500h17M5 22h17M5 25h11" strokeDasharray="1.600 1.500" />
      </svg>
      <span className="-mt-px ml-[19px] whitespace-nowrap text-[17px] tracking-[0.4px]">ЗАПИСАТЬСЯ НА ПРИЕМ</span>
      <div className="ml-[219px] flex h-[40px] w-[377px] items-center overflow-hidden rounded-[6px] bg-white pl-[15px]">
        <svg className="h-[20px] w-[30px] shrink-0" viewBox="0 0 30 20" fill="none" stroke="#e3bb40" strokeWidth="1.300">
          <rect x=".8" y=".8" width="28.400" height="18.400" rx="1.500" />
          <path d="M4 4l8.500 7c1.500 1.300 3.500 1.300 5 0L26 4M4 16.500l7-6M26 16.500l-7-6" />
        </svg>
        <span className="ml-[9px] whitespace-nowrap text-[13px] tracking-[-0.24px] text-[#7f7f7f]">Узнавайте об акциях первыми</span>
        <button className="ml-auto h-[40px] w-[100px] shrink-0 rounded-[6px] bg-[#e3bb40] text-[13px] font-bold tracking-[-0.36px]">Подписаться</button>
      </div>
    </div>
  );
}

function ContactPanel() {
  return (
    <aside className="relative ml-[395px] flex h-[505px] w-[330px] flex-col bg-white/93 text-[13px] leading-[18px] text-[#171717] shadow-[0_0_10px_rgba(0,0,0,0.06)]">
      <div className="flex pl-[71px] pt-[49px]">
        <Logo className="h-[37px] w-[128px]" />
        <svg className="ml-[11px] h-[38px] w-[50px]" viewBox="0 0 50 38" fill="none" stroke="#7d4a44" strokeWidth="1">
          <path d="M12 4c1.500-4 6-3.500 11-2 4-1.500 10-3 12.500 1.500 2 5-3.500 8-4 13C31 23 31 30 27.500 29.500 24 29 26 20 23.500 19.500 21 20 21 30 18 29.500 15.500 28 18.500 20 15 15 12 11 10.500 8 12 4z" />
          <path d="M12 5c-2 6 2 9 5 8 2-1 2-4 4-5M33 13c4 2 8 1 8-2s-5-3-6 0M21 11c2 3 5 3 7 0M22.500 7v2M27 6v2" strokeWidth="1.200" />
          <path d="M1 24c4 6 9 9 14 11 9 2 24 1 34-11" stroke="#d3b06a" strokeDasharray="2 2.500" strokeWidth="2" />
        </svg>
      </div>
      <div className="mt-[56px] flex pl-[15px]">
        <svg className="mt-[8px] h-[26px] w-[26px]" viewBox="0 0 26 26" fill="none" stroke="#e6bf55" strokeWidth="1.100">
          <path d="M13 22.500C10 18 5.500 13.500 5.500 8.500a7.500 7.500 0 0 1 15 0c0 5-4.500 9.500-7.500 14z" />
          <circle cx="13" cy="8.500" r="2.800" />
          <path d="M8.500 18.500C4 19 1 20.300 1 22c0 1.700 5 3.200 12 3.200s12-1.500 12-3.200c0-1.700-3-3-7.500-3.500" />
        </svg>
        <p className="ml-[8px] text-[15px] leading-[18px]">
          <span className="block tracking-[0.28px]">г. Краснодар, ул. Выгоная , 20</span>
          <span className="block tracking-[0.13px]">район ТЭЦ</span>
        </p>
      </div>
      <div className="mt-[11px] flex h-[24px] pl-[16px]">
        <svg className="h-[24px] w-[25px]" viewBox="0 0 25 24" fill="none" stroke="#e6bf55" strokeWidth="1.100">
          <path d="M1 4C1 2 4 .8 5.200 1c1.500.5 4.500 5 4 6.500C8.700 9 6.500 9 7 10.500 8 13 13 17.500 15.500 18c1.500.3 1.500-2.500 4-2s5.500 3 5 4.500c-.5 1.500-3 3-5.500 2.500C9 21.500 1 12 1 4z" />
        </svg>
        <p className="ml-[9px] pt-[2px] text-[14px] font-bold leading-[20px] tracking-[1.07px]">+7 (861) 213-06-76</p>
      </div>
      <div className="mt-[28px] flex pl-[20px]">
        <div className="w-[167px] whitespace-pre">
          <p className="tracking-[0.25px]">График работы:</p>
          <p className="tracking-[0.22px]">{"Пн-Пт  9.00 - 20.00"}</p>
          <p className="tracking-[0.21px]">{"Сб  9.00 - 16.00"}</p>
        </div>
        <div>
          <p className="tracking-[0.28px]">Социальные сети:</p>
          <div className="mt-[8px] flex items-center pl-[18px]">
            <svg className="h-[18px] w-[30px]" viewBox="0 0 30 18" fill="#2d74e8">
              <path d="M.3 1.500h5c.6 3.500 2.500 7 4.500 8 .6.300.8-.5.800-1.500V4c0-1.500-1-1.500-1.200-2 .3-1.300 2-1.800 4.600-1.800 2.500 0 3.600.4 3.600 2V7.500c0 1 .4 1.300 1 1 1.500-1 3.300-4 4.300-6.300.3-.6.600-.8 1.200-.8h4.600c.8 0 1 .5.700 1.200-.8 2.200-3 4.800-4.500 6.600-.6.700-.5 1.100.1 1.700 1.700 1.600 4 3.600 4.800 5.100.5 1-.1 1.800-1.200 1.800H24c-1 0-1.500-.6-2.500-1.600-1.300-1.300-2-2-2.900-1.900-1 .1-.8 1.600-1 2.500-.2.800-.7 1-1.600 1C8 17.800 2.500 12.500 0 2.300c-.1-.5 0-.8.3-.8z" />
            </svg>
            <svg className="ml-[20px] h-[21px] w-[21px]" viewBox="0 0 21 21">
              <rect width="21" height="21" rx="2.500" fill="#000" />
              <path fill="#fff" d="M2.500 9h2.600a5.700 5.700 0 1 0 10.800 0h2.600v8.500a1 1 0 0 1-1 1h-14a1 1 0 0 1-1-1z" />
              <circle cx="10.500" cy="10.700" r="3.600" fill="none" stroke="#fff" strokeWidth="1.400" />
              <rect x="14.500" y="2.300" width="4" height="4" rx=".5" fill="#fff" />
            </svg>
          </div>
        </div>
      </div>
      <div className="mt-[32px] pr-[13px] text-center text-black">
        <p className="tracking-[0.24px]">Разработка сайта</p>
        <p className="tracking-[0.25px]">и продвижение сайта</p>
        <p className="mt-[30px] text-[25px] font-semibold leading-[30px] tracking-[1.8px]">SKGROUPS</p>
      </div>
      <div className="ml-[18px] mt-[27px] w-[288px] border-t border-[#dadada]" />
      <p className="mt-[17px] pl-[39px] tracking-[0.24px] text-[#8c8c8c]">ДЕНТиС 2019 © Все права защищены</p>
    </aside>
  );
}

export default function App() {
  return (
    <div className="h-[2567px] w-[1920px] overflow-hidden bg-white font-['Noto_Sans','Open_Sans',sans-serif]">
      <Header />
      <Hero />
      <main className="h-[1675px] w-[1917px] bg-[#f1f1f1] pt-[70px]">
        <div className="ml-[490px] w-[941px]">
          <div className="-ml-[5px] text-center">
            <h2 className="text-[29px] leading-[36px] text-[#e2b74f]">Отзывы</h2>
            <p className="mt-[3px] text-[17px] font-light leading-[24px] tracking-[0.41px] text-[#a0a0a0]">стоматологической клиники «ДЕНТиС»</p>
          </div>
          <ReviewForm />
          <div className="mt-[50px] flex flex-col gap-[50px]">
            <div>
              <Review />
              <div className={`ml-auto mt-[30px] h-[87px] w-[521px] pl-[30px] pt-[18px] ${card} ${body}`}>
                <p className="tracking-[-0.16px]">Lorem ipsum dolor sit amet, consectetur adipisicing elit, sed do eiusmod</p>
                <p className="tracking-[-0.16px]">tempor incididunt ut labore et dolore magna aliqua. Ut enim ad minim</p>
                <p className="tracking-[-0.16px]">veniam, quis nostrud exercitation ullamco laboris nisi ut aliquip ex ea</p>
              </div>
            </div>
            <Review />
            <Review />
            <Review />
            <Review />
          </div>
        </div>
      </main>
      <footer className="pt-px">
        <ActionBar />
        <div className="relative h-[505px] overflow-hidden">
          <CityMap />
          <ContactPanel />
        </div>
      </footer>
    </div>
  );
}
